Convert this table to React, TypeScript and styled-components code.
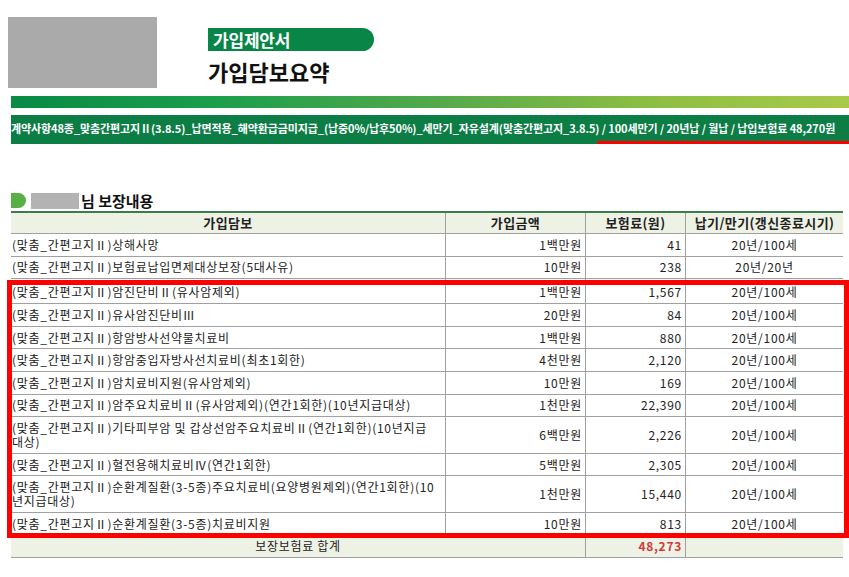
import React from 'react';
import styled, { createGlobalStyle } from 'styled-components';

const GlobalStyle = createGlobalStyle`
  html, body { margin: 0; padding: 0; background: #fff; }
  body {
    font-family: "Noto Sans CJK KR", "Noto Sans", sans-serif;
    color: #222;
  }
`;

const Page = styled.div`
  width: 849px;
  overflow: hidden;
`;

const Header = styled.header`
  display: flex;
  padding: 17px 0 0 8px;
`;

const PhotoBlank = styled.div`
  width: 149px;
  height: 71px;
  background: #aaaaaa;
  flex-shrink: 0;
`;

const TitleCol = styled.div`
  display: flex;
  flex-direction: column;
  align-items: flex-start;
  margin-left: 51px;
  padding-top: 11px;
`;

const Pill = styled.div`
  width: 166px;
  height: 23px;
  box-sizing: border-box;
  padding-left: 5px;
  background: #0a8548;
  border-radius: 0 12px 12px 0;
  color: #fff;
  font-size: 17px;
  font-weight: 700;
  line-height: 23px;
  letter-spacing: -0.2px;
`;

const Title = styled.h1`
  margin: 6px 0 0 0;
  font-size: 22px;
  font-weight: 700;
  line-height: 28px;
  color: #111;
`;

const GradientBar = styled.div`
  margin: 8px 0 0 11px;
  height: 12px;
  background: linear-gradient(90deg, #098a45 0%, #1d9e4b 25%, #52a84c 50%, #8bbd43 75%, #a9c94a 100%);
`;

const InfoBar = styled.div`
  position: relative;
  margin: 7px 0 0 11px;
  height: 29px;
  background: #0b7d45;
  color: #fff;
  display: flex;
  align-items: center;
  padding-bottom: 3px;
  box-sizing: border-box;
  font-size: 11px;
  font-weight: 700;
  letter-spacing: -0.1px;
  white-space: nowrap;
`;

const InfoUnderline = styled.span`
  position: absolute;
  right: 0;
  bottom: 0;
  width: 252px;
  height: 3px;
  background: #f00;
`;

const SectionTitle = styled.h2`
  display: flex;
  align-items: center;
  margin: 48px 0 0 11px;
  height: 17px;
  font-size: 15px;
  font-weight: 700;
  line-height: 17px;
  color: #111;
`;

const Bullet = styled.span`
  width: 15px;
  height: 15px;
  background: #56b046;
  border-radius: 0 8px 8px 0;
`;

const NameBlank = styled.span`
  width: 48px;
  height: 16px;
  margin: 0 2px 0 5px;
  background: #b3b3b3;
`;

const Table = styled.div`
  margin: 2px 0 0 11px;
  width: 832px;
  font-size: 12px;
  letter-spacing: 0.72px;
`;

const HeadRow = styled.div`
  display: grid;
  grid-template-columns: 435px 140px 100px 157px;
  background: #eef2e4;
  border-top: 2px solid #3b7b4c;
  border-bottom: 1px solid #a0a0a0;
`;

const HeadCell = styled.div<{ $last?: boolean }>`
  padding: 3px 2px;
  line-height: 14px;
  text-align: center;
  font-size: 13px;
  font-weight: 700;
  letter-spacing: 0.4px;
  color: #222;
  border-right: ${p => (p.$last ? 'none' : '1px solid #a0a0a0')};
`;

const Row = styled.div`
  display: grid;
  grid-template-columns: 435px 140px 100px 157px;
  border-bottom: 1px solid #a0a0a0;
`;

const Cell = styled.div<{ $align?: 'left' | 'right' | 'center'; $last?: boolean }>`
  display: flex;
  align-items: center;
  justify-content: ${p => (p.$align === 'right' ? 'flex-end' : p.$align === 'center' ? 'center' : 'flex-start')};
  text-align: ${p => p.$align || 'left'};
  padding: 3.8px ${p => (p.$align === 'right' ? '3px' : p.$align === 'center' ? '2px' : '8px')} 3.8px ${p => (p.$align === 'left' || !p.$align ? '1px' : '2px')};
  line-height: 14px;
  color: #222;
  border-right: ${p => (p.$last ? 'none' : '1px solid #a0a0a0')};
`;

const Highlight = styled.div`
  position: relative;
  & > ${Row}:first-child > div {
    padding-top: 6.3px;
  }
  &::after {
    content: '';
    position: absolute;
    top: 1px;
    left: -4px;
    right: -6px;
    bottom: -2px;
    border: 5px solid #f00;
    pointer-events: none;
  }
`;

const TotalRow = styled.div`
  display: grid;
  grid-template-columns: 575px 100px 157px;
  background: #eef2e4;
  border-bottom: 1px solid #a0a0a0;
`;

const TotalValue = styled(Cell)`
  color: #d0393b;
  font-weight: 700;
`;

type Item = { name: string; amount: string; premium: string; term: string };

const baseRows: Item[] = [
  { name: '(맞춤_간편고지Ⅱ)상해사망', amount: '1백만원', premium: '41', term: '20년/100세' },
  { name: '(맞춤_간편고지Ⅱ)보험료납입면제대상보장(5대사유)', amount: '10만원', premium: '238', term: '20년/20년' },
];

const highlightedRows: Item[] = [
  { name: '(맞춤_간편고지Ⅱ)암진단비Ⅱ(유사암제외)', amount: '1백만원', premium: '1,567', term: '20년/100세' },
  { name: '(맞춤_간편고지Ⅱ)유사암진단비Ⅲ', amount: '20만원', premium: '84', term: '20년/100세' },
  { name: '(맞춤_간편고지Ⅱ)항암방사선약물치료비', amount: '1백만원', premium: '880', term: '20년/100세' },
  { name: '(맞춤_간편고지Ⅱ)항암중입자방사선치료비(최초1회한)', amount: '4천만원', premium: '2,120', term: '20년/100세' },
  { name: '(맞춤_간편고지Ⅱ)암치료비지원(유사암제외)', amount: '10만원', premium: '169', term: '20년/100세' },
  { name: '(맞춤_간편고지Ⅱ)암주요치료비Ⅱ(유사암제외)(연간1회한)(10년지급대상)', amount: '1천만원', premium: '22,390', term: '20년/100세' },
  { name: '(맞춤_간편고지Ⅱ)기타피부암 및 갑상선암주요치료비Ⅱ(연간1회한)(10년지급대상)', amount: '6백만원', premium: '2,226', term: '20년/100세' },
  { name: '(맞춤_간편고지Ⅱ)혈전용해치료비Ⅳ(연간1회한)', amount: '5백만원', premium: '2,305', term: '20년/100세' },
  { name: '(맞춤_간편고지Ⅱ)순환계질환(3-5종)주요치료비(요양병원제외)(연간1회한)(10년지급대상)', amount: '1천만원', premium: '15,440', term: '20년/100세' },
  { name: '(맞춤_간편고지Ⅱ)순환계질환(3-5종)치료비지원', amount: '10만원', premium: '813', term: '20년/100세' },
];

const DataRow = ({ item }: { item: Item }) => (
  <Row>
    <Cell>{item.name}</Cell>
    <Cell $align="right">{item.amount}</Cell>
    <Cell $align="right">{item.premium}</Cell>
    <Cell $align="center" $last>{item.term}</Cell>
  </Row>
);

export default function App() {
  return (
    <Page>
      <GlobalStyle />
      <Header>
        <PhotoBlank />
        <TitleCol>
          <Pill>가입제안서</Pill>
          <Title>가입담보요약</Title>
        </TitleCol>
      </Header>
      <GradientBar />
      <InfoBar>
        계약사항48종_맞춤간편고지Ⅱ(3.8.5)_납면적용_해약환급금미지급_(납중0%/납후50%)_세만기_자유설계(맞춤간편고지_3.8.5) / 100세만기 / 20년납 / 월납 / 납입보험료 48,270원
        <InfoUnderline />
      </InfoBar>
      <SectionTitle>
        <Bullet />
        <NameBlank />
        님 보장내용
      </SectionTitle>
      <Table>
        <HeadRow>
          <HeadCell>가입담보</HeadCell>
          <HeadCell>가입금액</HeadCell>
          <HeadCell>보험료(원)</HeadCell>
          <HeadCell $last>납기/만기(갱신종료시기)</HeadCell>
        </HeadRow>
        {baseRows.map(r => (
          <DataRow key={r.name} item={r} />
        ))}
        <Highlight>
          {highlightedRows.map(r => (
            <DataRow key={r.name} item={r} />
          ))}
        </Highlight>
        <TotalRow>
          <Cell $align="center">보장보험료 합계</Cell>
          <TotalValue $align="right">48,273</TotalValue>
          <Cell $last />
        </TotalRow>
      </Table>
    </Page>
  );
}
